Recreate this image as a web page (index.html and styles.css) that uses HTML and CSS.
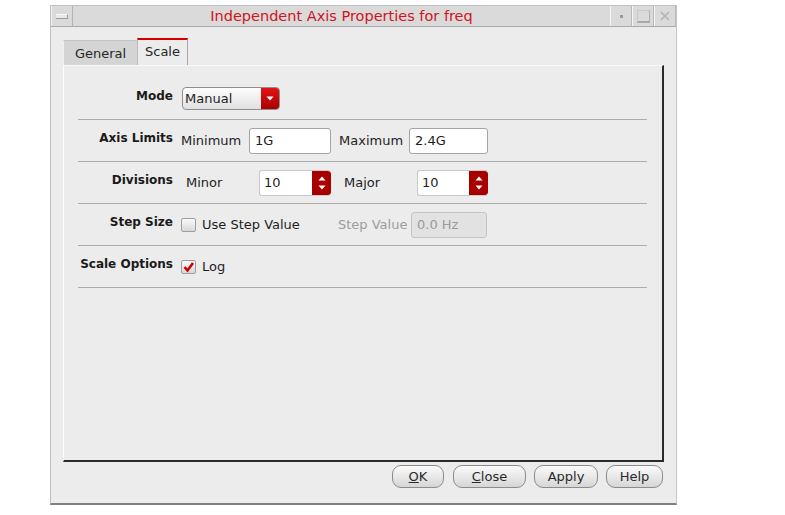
FILE: index.html
```html
<!DOCTYPE html>
<html>
<head>
<meta charset="utf-8">
<link rel="stylesheet" href="styles.css">
</head>
<body>
<div class="window">
  <div class="titlebar">
    <div class="tb-menu"><span class="tb-menu-bar"></span></div>
    <div class="tb-title">Independent Axis Properties for freq</div>
    <div class="tb-btn"><span class="tb-dot"></span></div>
    <div class="tb-btn"><span class="tb-square"></span></div>
    <div class="tb-btn">
      <svg width="12" height="12" viewBox="0 0 12 12"><path d="M2 2 L10 10 M10 2 L2 10" stroke="#b4b4b4" stroke-width="1.6" fill="none"/></svg>
    </div>
  </div>
  <div class="body">
    <div class="tabs">
      <div class="tab">General</div>
      <div class="tab active">Scale</div>
    </div>
    <div class="panel">
      <div class="row">
        <div class="label">Mode</div>
        <div class="combo">
          <span class="combo-text">Manual</span>
          <span class="combo-arrow"><svg width="8" height="5" viewBox="0 0 8 5"><path d="M0.5 0.5 L7.5 0.5 L4 4.5 Z" fill="#fff"/></svg></span>
        </div>
      </div>
      <div class="row">
        <div class="label">Axis Limits</div>
        <span class="text w-min">Minimum</span>
        <div class="input w82">1G</div>
        <span class="text w-max">Maximum</span>
        <div class="input w79">2.4G</div>
      </div>
      <div class="row">
        <div class="label">Divisions</div>
        <span class="text w-minor">Minor</span>
        <div class="spin w72">
          <span class="spin-text">10</span>
          <span class="spin-btns">
            <svg width="8" height="5" viewBox="0 0 8 5"><path d="M0.5 4.5 L7.5 4.5 L4 0.5 Z" fill="#fff"/></svg>
            <svg width="8" height="5" viewBox="0 0 8 5"><path d="M0.5 0.5 L7.5 0.5 L4 4.5 Z" fill="#fff"/></svg>
          </span>
        </div>
        <span class="text w-major">Major</span>
        <div class="spin w71">
          <span class="spin-text">10</span>
          <span class="spin-btns">
            <svg width="8" height="5" viewBox="0 0 8 5"><path d="M0.5 4.5 L7.5 4.5 L4 0.5 Z" fill="#fff"/></svg>
            <svg width="8" height="5" viewBox="0 0 8 5"><path d="M0.5 0.5 L7.5 0.5 L4 4.5 Z" fill="#fff"/></svg>
          </span>
        </div>
      </div>
      <div class="row">
        <div class="label">Step Size</div>
        <span class="check"></span>
        <span class="text w-use">Use Step Value</span>
        <span class="text disabled w-step">Step Value</span>
        <div class="input disabled-input w76">0.0 Hz</div>
      </div>
      <div class="row">
        <div class="label">Scale Options</div>
        <span class="check checked">
          <svg width="13" height="12" viewBox="0 0 13 12"><path d="M2.5 6 L5.5 9.5 L11 2" stroke="#d00000" stroke-width="2.6" fill="none" stroke-linejoin="miter"/></svg>
        </span>
        <span class="text">Log</span>
      </div>
    </div>
    <div class="buttons">
      <div class="btn b-ok"><u>O</u>K</div>
      <div class="btn b-close"><u>C</u>lose</div>
      <div class="btn b-apply">Apply</div>
      <div class="btn b-help">Help</div>
    </div>
  </div>
</div>
</body>
</html>
```

FILE: styles.css
```css
html, body {
  margin: 0;
  padding: 0;
  background: #ffffff;
}

body {
  font-family: "DejaVu Sans", "Liberation Sans", sans-serif;
  font-size: 13px;
  color: #1e1e1e;
}

.window {
  margin-left: 50px;
  margin-top: 5px;
  width: 627px;
  height: 500px;
  box-sizing: border-box;
  background: #ececec;
  border-left: 1px solid #bdbdbd;
  border-right: 1px solid #c6c6c6;
  border-bottom: 2px solid #808080;
  display: flex;
  flex-direction: column;
}

.titlebar {
  display: flex;
  height: 22px;
  box-sizing: border-box;
  border-top: 1px solid #c2c2c2;
  border-bottom: 1px solid #a9a9a9;
  background: #dadada;
}

.tb-menu {
  width: 22px;
  box-sizing: border-box;
  border-right: 1px solid #b4b4b4;
  border-left: 1px solid #f4f4f4;
  display: flex;
  align-items: center;
  justify-content: center;
}

.tb-menu-bar {
  width: 11px;
  height: 3px;
  background: #e8e8e8;
  border-top: 1px solid #fafafa;
  border-bottom: 1px solid #9a9a9a;
  border-right: 1px solid #9a9a9a;
}

.tb-title {
  flex: 1;
  text-align: center;
  color: #d0141c;
  font-size: 14.5px;
  line-height: 20px;
}

.tb-btn {
  width: 22px;
  box-sizing: border-box;
  border-left: 1px solid #f6f6f6;
  border-right: 1px solid #b8b8b8;
  display: flex;
  align-items: center;
  justify-content: center;
}

.tb-dot {
  width: 3px;
  height: 3px;
  background: #9a9a9a;
}

.tb-square {
  width: 11px;
  height: 10px;
  border: 1px solid #c8c8c8;
  border-bottom: 2px solid #a8a8a8;
  border-right-color: #b0b0b0;
}

.body {
  flex: 1;
  display: flex;
  flex-direction: column;
  padding: 11px 12px 0 12px;
}

.tabs {
  display: flex;
  align-items: flex-end;
  height: 27px;
}

.tab {
  height: 25px;
  box-sizing: border-box;
  width: 74px;
  text-align: center;
  line-height: 25px;
  background: #d4d4d4;
  border-top: 1px solid #c4c4c4;
  border-left: 1px solid #f0f0f0;
  color: #262626;
}

.tab.active {
  width: 51px;
  height: 27px;
  line-height: 24px;
  background: #ececec;
  border-top: 2px solid #d40000;
  border-left: 1px solid #bcbcbc;
  border-right: 1px solid #a8a8a8;
}

.panel {
  height: 397px;
  box-sizing: border-box;
  border-top: 1px solid #f8f8f8;
  border-left: 1px solid #fdfdfd;
  border-right: 2px solid #2a2a2a;
  border-bottom: 2px solid #2a2a2a;
  padding: 12px 15px 0 14px;
  display: flex;
  flex-direction: column;
}

.row {
  height: 42px;
  box-sizing: border-box;
  border-bottom: 1px solid #acacac;
  display: flex;
  align-items: center;
}

.label {
  width: 95px;
  flex: none;
  text-align: right;
  font-weight: bold;
  font-size: 12px;
  margin-bottom: 6px;
  margin-right: 8px;
  color: #1a1a1a;
}

.text {
  flex: none;
  white-space: nowrap;
}

.w-min { width: 68px; }
.w-max { width: 70px; margin-left: 8px; }
.w-minor { width: 73px; margin-left: 5px; }
.w-major { width: 73px; margin-left: 13px; }
.w-use { width: 136px; margin-left: 6px; }
.w-step { width: 73px; }

.disabled {
  color: #9c9c9c;
}

.combo {
  display: flex;
  width: 98px;
  height: 23px;
  box-sizing: border-box;
  border: 1px solid #8e8e8e;
  border-radius: 4px;
  overflow: hidden;
  background: linear-gradient(#fdfdfd, #e0e0e0);
  margin-left: 1px;
}

.combo-text {
  flex: 1;
  padding-left: 2px;
  line-height: 22px;
}

.combo-arrow {
  width: 18px;
  background: linear-gradient(#e41414, #a80000);
  display: flex;
  align-items: center;
  justify-content: center;
}

.input {
  height: 26px;
  box-sizing: border-box;
  border: 1px solid #a4a4a4;
  border-radius: 3px;
  background: #ffffff;
  line-height: 24px;
  padding-left: 5px;
  flex: none;
}

.disabled-input {
  background: #e2e2e2;
  border-color: #c4c4c4;
  color: #9a9a9a;
}

.w82 { width: 82px; }
.w79 { width: 79px; }
.w76 { width: 76px; }
.w72 { width: 72px; }
.w71 { width: 71px; }

.spin {
  height: 26px;
  box-sizing: border-box;
  display: flex;
  flex: none;
  border: 1px solid #c8c8c8;
  border-right: none;
  border-radius: 3px;
  background: #ffffff;
  overflow: hidden;
}

.spin-text {
  flex: 1;
  padding-left: 4px;
  line-height: 24px;
}

.spin-btns {
  width: 19px;
  background: #a80000;
  border-radius: 0 3px 3px 0;
  display: flex;
  flex-direction: column;
  align-items: center;
  justify-content: center;
  gap: 4px;
}

.check {
  width: 15px;
  height: 14px;
  box-sizing: border-box;
  border: 1px solid #9e9e9e;
  border-radius: 2px;
  background: linear-gradient(#fafafa, #d8d8d8);
  flex: none;
  display: flex;
  align-items: center;
  justify-content: center;
}

.check.checked + .text {
  margin-left: 6px;
}

.buttons {
  display: flex;
  justify-content: flex-end;
  gap: 8px;
  margin-top: 3px;
  margin-right: 1px;
}

.btn {
  height: 23px;
  box-sizing: border-box;
  border: 1px solid #8c8c8c;
  border-radius: 9px;
  background: linear-gradient(#fbfbfb, #d6d6d6);
  text-align: center;
  line-height: 21px;
  color: #2a2a2a;
}

.b-ok { width: 52px; margin-right: 1px; }
.b-close { width: 73px; }
.b-apply { width: 64px; }
.b-help { width: 57px; }
```
